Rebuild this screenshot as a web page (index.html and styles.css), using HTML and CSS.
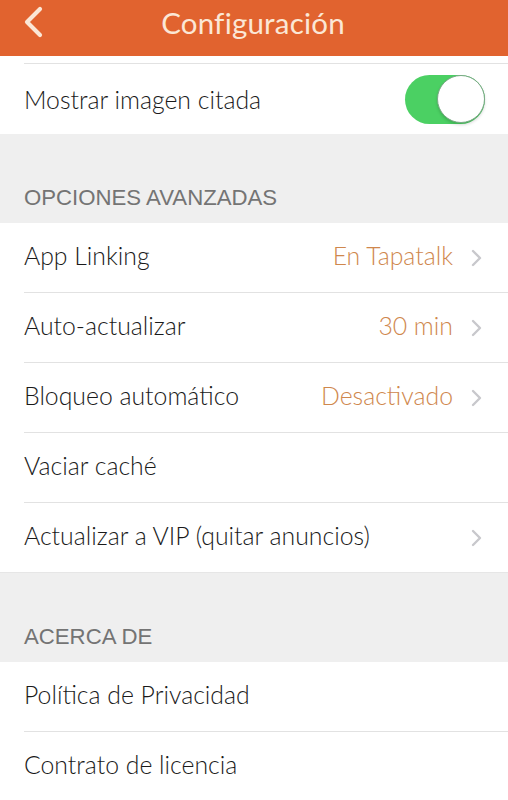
FILE: index.html
```html
<!DOCTYPE html>
<html lang="es">
<head>
<meta charset="utf-8">
<title>Configuración</title>
<link rel="stylesheet" href="styles.css">
</head>
<body>
<header class="navbar">
  <span class="back">
    <svg width="22" height="32" viewBox="0 0 22 32"><path d="M18 3 L5 16 L18 29" fill="none" stroke="#fbe7d6" stroke-width="4.2" stroke-linecap="round" stroke-linejoin="round"/></svg>
  </span>
  <h1 class="title">Configuración</h1>
</header>
<main class="content">
  <div class="group top-group">
    <div class="row toggle-row">
      <span class="label">Mostrar imagen citada</span>
      <span class="switch"><span class="knob"></span></span>
    </div>
  </div>
  <div class="section-head">OPCIONES AVANZADAS</div>
  <div class="group">
    <div class="row"><span class="label">App Linking</span><span class="value">En Tapatalk</span><span class="chev"><svg width="12" height="18" viewBox="0 0 12 18"><path d="M2 2 L9 9 L2 16" fill="none" stroke="#c8c8cc" stroke-width="2.4" stroke-linecap="round" stroke-linejoin="round"/></svg></span></div>
    <div class="row"><span class="label">Auto-actualizar</span><span class="value">30 min</span><span class="chev"><svg width="12" height="18" viewBox="0 0 12 18"><path d="M2 2 L9 9 L2 16" fill="none" stroke="#c8c8cc" stroke-width="2.4" stroke-linecap="round" stroke-linejoin="round"/></svg></span></div>
    <div class="row"><span class="label">Bloqueo automático</span><span class="value">Desactivado</span><span class="chev"><svg width="12" height="18" viewBox="0 0 12 18"><path d="M2 2 L9 9 L2 16" fill="none" stroke="#c8c8cc" stroke-width="2.4" stroke-linecap="round" stroke-linejoin="round"/></svg></span></div>
    <div class="row"><span class="label">Vaciar caché</span></div>
    <div class="row"><span class="label">Actualizar a VIP (quitar anuncios)</span><span class="chev"><svg width="12" height="18" viewBox="0 0 12 18"><path d="M2 2 L9 9 L2 16" fill="none" stroke="#c8c8cc" stroke-width="2.4" stroke-linecap="round" stroke-linejoin="round"/></svg></span></div>
  </div>
  <div class="section-head">ACERCA DE</div>
  <div class="group">
    <div class="row"><span class="label">Política de Privacidad</span></div>
    <div class="row"><span class="label">Contrato de licencia</span></div>
  </div>
</main>
</body>
</html>
```
FILE: styles.css
```css
* { box-sizing: border-box; }
html, body { margin: 0; padding: 0; }
body {
  width: 508px;
  height: 800px;
  overflow: hidden;
  background: #efefef;
  font-family: Lato, "Open Sans", sans-serif;
  color: #222;
}
.navbar {
  height: 56px;
  background: #e1632f;
  display: flex;
  align-items: center;
  justify-content: center;
  position: relative;
}
.back {
  position: absolute;
  left: 22px;
  top: 6px;
  display: flex;
}
.title {
  margin: 0;
  font-size: 29.5px;
  font-weight: 400;
  color: #fbe7d6;
  letter-spacing: 0.2px;
  margin-top: -11px;
  margin-left: -2px;
}
.group {
  background: #fff;
}
.top-group {
  padding-top: 6px;
  border-top: 1px solid #fff;
}
.top-group .row {
  border-top: 1px solid #e2e2e2;
}
.row {
  height: 70px;
  margin-left: 24px;
  padding-right: 25px;
  padding-bottom: 4px;
  display: flex;
  align-items: center;
  border-bottom: 1px solid #e2e2e2;
}
.group .row:last-child { margin-left: 0; padding-left: 24px; border-bottom: 1px solid #e6e6e6; }
.top-group .row:last-child { margin-left: 24px; padding-left: 0; border-bottom: none; height: 71px; padding-bottom: 0; }
.label {
  flex: 1;
  font-size: 24.8px;
  font-weight: 300;
  color: #1a1a1a;
}
.value {
  font-size: 24.8px;
  font-weight: 300;
  color: #cf874d;
  margin-right: 18px;
}
.chev { display: flex; margin-top: 4px; }
.switch {
  width: 80px;
  height: 49px;
  border-radius: 25px;
  background: #4bd063;
  position: relative;
  margin-right: -2px;
}
.knob {
  position: absolute;
  right: 0;
  top: 0;
  width: 48px;
  height: 48px;
  border-radius: 50%;
  background: #fff;
  border: 1.5px solid #7aa985;
  box-shadow: 0 2px 3px rgba(0,0,0,0.15);
}
.section-head {
  height: 89px;
  padding: 0 24px 12px;
  display: flex;
  align-items: flex-end;
  font-family: "Liberation Sans", Arial, sans-serif;
  font-size: 22.2px;
  color: #747474;
}
```
